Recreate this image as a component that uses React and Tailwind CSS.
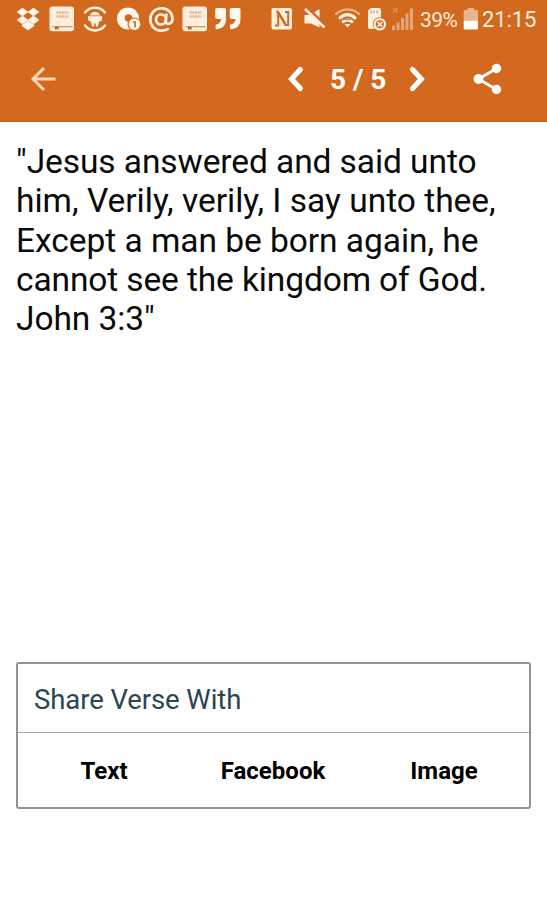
function DropboxIcon() {
  return (
    <svg className="ml-4 h-6 w-6 shrink-0" viewBox="0 0 24 24" fill="#fff6ea" stroke="#fff6ea" strokeWidth="0.500">
      <path d="M6.5 1 12 5 6.5 9 1 5ZM17.5 1 23 5l-5.500 4L12 5ZM6.500 9 12 13l-5.500 4L1 13ZM17.500 9 23 13l-5.500 4L12 13ZM12 13.800l6 4.200v1L12 23l-6-4v-1Z" />
    </svg>
  );
}

function BibleIcon({ className }) {
  return (
    <svg className={className} viewBox="0 0 26 26">
      <rect x="0.500" y="0.500" width="24.500" height="24.800" rx="3" fill="#fdeedd" />
      <path d="M7.500 6.500h12M7.500 10.500h12" stroke="#e8b48b" strokeWidth="2.300" strokeDasharray="2 0.700" />
      <path d="M3.500 20.700h20" stroke="#d98c52" strokeWidth="1.200" />
      <path d="M6 20.700h3.500V24L7.700 22.800 6 24Z" fill="#b8581c" />
    </svg>
  );
}

function RobotIcon() {
  return (
    <svg className="ml-[7px] h-[26px] w-[26px] shrink-0" viewBox="0 0 26 26" fill="none">
      <path d="M3 6.500C8 0 18 0 23 6.500M3 19.500c5 6.500 15 6.500 20 0" stroke="#fff0e0" strokeWidth="2.500" strokeLinecap="round" />
      <path d="M8 9.500C9 4.500 17 4.500 18 9.500l2 .8v3.900l-3 1.600-1 4.700h-2.200v-3h-1.600v3H10l-1-4.700-3-1.600v-3.900Z" fill="#fff0e0" />
      <path d="M7.500 9.800h11" stroke="#d87c3a" strokeWidth="0.900" />
    </svg>
  );
}

function DiscAlertIcon() {
  return (
    <svg className="ml-2 h-[26px] w-[26px] shrink-0" viewBox="0 0 26 26">
      <circle cx="12" cy="12.500" r="11" fill="#fff6ec" />
      <circle cx="12.500" cy="12" r="3.800" fill="#d2691e" />
      <circle cx="18.300" cy="18.200" r="6.800" fill="#d2691e" />
      <circle cx="18.500" cy="18.200" r="5.800" fill="#fff6ec" />
      <path d="M17 16h2v5.500" fill="none" stroke="#d2691e" strokeWidth="1.700" />
    </svg>
  );
}

function AtIcon() {
  return (
    <svg className="ml-[6px] h-[27px] w-[27px] shrink-0" viewBox="0 0 27 27" fill="none" stroke="#fff3e7" strokeWidth="2.600" strokeLinecap="round">
      <circle cx="13" cy="13.500" r="5" />
      <path d="M18.400 8.500 17.800 15c-.2 4.500 6.700 3.500 6.700-2C24.500 6.800 20 2.200 13.500 2.200 7 2.200 2.300 7.200 2.300 13.500c0 6.500 4.700 11.200 11.200 11.200 2.500 0 4.500-.6 6.200-1.600" />
    </svg>
  );
}

function QuoteIcon() {
  return (
    <svg className="ml-1.5 h-6 w-[27px] shrink-0" viewBox="0 0 27 24" fill="#fff9ef">
      <path d="M3 1h7.500Q12 1 12 2.500V12q0 9.500-9 10.300-1.500 0-1.500-1.500v-2q0-1.200 1.500-1.500 3.500-.8 4-5.300H3Q1.200 12 1.200 10V3Q1.200 1 3 1ZM17.500 1H25q1.500 0 1.500 1.500V12q0 9.500-9 10.300-1.500 0-1.500-1.500v-2q0-1.200 1.500-1.500 3.500-.8 4-5.300h-4q-1.800 0-1.800-2V3q0-2 1.800-2Z" />
    </svg>
  );
}

function NfcIcon() {
  return (
    <svg className="h-6 w-[22px] shrink-0" viewBox="0 0 22 24">
      <rect x="0.500" y="1" width="20.500" height="21.500" rx="2" fill="#fff0df" />
      <path d="M4 18.500h3.200V6l7.300 12h2.700V5H14" fill="none" stroke="#d2691e" strokeWidth="2" />
      <path d="M5 5h2.500l7 11.500" fill="none" stroke="#d2691e" strokeWidth="1.500" />
    </svg>
  );
}

function MuteIcon() {
  return (
    <svg className="ml-[10px] h-6 w-6 shrink-0" viewBox="0 0 24 24">
      <path d="M1.500 8H7L16.500 2v18.500L8 16.500H1.500Z" fill="#fff0df" />
      <path d="M3.500 0 24 19.500" stroke="#d2691e" strokeWidth="2.600" />
      <path d="M2 2 21.500 20.500" stroke="#fff0df" strokeWidth="2.600" />
    </svg>
  );
}

function WifiIcon() {
  return (
    <svg className="ml-[7px] h-6 w-[27px] shrink-0" viewBox="0 0 27 24" fill="none" strokeLinecap="round">
      <path d="M2 7C8.500 1 18.500 1 25 7" stroke="#e9ae7d" strokeWidth="2.500" />
      <path d="M6 10.800c4.500-4.200 10.500-4.200 15 0" stroke="#fff0df" strokeWidth="3.200" />
      <path d="M9.300 14.600c2.500-2.200 5.900-2.200 8.400 0" stroke="#fff0df" strokeWidth="3.200" />
      <path d="M10 12.200h7" stroke="#9b8b83" strokeWidth="1.400" />
      <path d="m10.500 17 3 3.500 3-3.500Z" fill="#fff0df" />
    </svg>
  );
}

function SimIcon() {
  return (
    <svg className="ml-[6px] h-[26px] w-5 shrink-0" viewBox="0 0 20 26">
      <path d="M1 4.500 4 2h7.500Q14 2 14 4v19H3q-2 0-2-2Z" fill="#fff2e2" />
      <path d="M4 4.500v3M7 4.500v3M10 4.500v3" stroke="#d98a50" strokeWidth="1.200" />
      <circle cx="12.800" cy="18.300" r="7" fill="#d2691e" />
      <circle cx="12.800" cy="18.300" r="5.200" fill="none" stroke="#fff2e2" strokeWidth="2.200" />
      <path d="m10.500 16 4.600 4.600m0-4.600-4.600 4.600" stroke="#fff2e2" strokeWidth="1.700" />
    </svg>
  );
}

function SignalIcon() {
  return (
    <svg className="ml-[5px] h-6 w-[23px] shrink-0" viewBox="0 0 23 24" fill="#e6a777">
      <path d="M0 18.500H3V23H0ZM4.500 15.500h3V23h-3ZM9 11h3v12H9ZM13.500 6.500h3V23h-3ZM18 1.500h3V23h-3Z" />
      <path d="m1.200 1 4.500 4.500m0-4.500L1.200 5.500" stroke="#e1965e" strokeWidth="1.100" />
    </svg>
  );
}

function BatteryIcon() {
  return (
    <svg className="ml-[5px] h-6 w-4 shrink-0" viewBox="0 0 16 24">
      <path d="M0.700 4Q.7 3 2 3h2.500V1h6.700v2h2.500q1.300 0 1.300 1v9.500H.7Z" fill="#e9b58a" />
      <path d="M0.700 13.500H15v8q0 1-1 1H1.700q-1 0-1-1Z" fill="#fffdf8" />
    </svg>
  );
}

function StatusBar() {
  return (
    <div className="flex h-[38px] items-center text-[#ffeedd]">
      <DropboxIcon />
      <BibleIcon className="ml-[9px] h-[26px] w-[26px] shrink-0" />
      <RobotIcon />
      <DiscAlertIcon />
      <AtIcon />
      <BibleIcon className="ml-[7px] h-[26px] w-[26px] shrink-0" />
      <QuoteIcon />
      <span className="w-[30px] shrink-0" />
      <NfcIcon />
      <MuteIcon />
      <WifiIcon />
      <SimIcon />
      <SignalIcon />
      <span className="mt-0.5 ml-[5px] w-[38px] shrink-0 text-[21px] leading-6 tracking-[-0.500px]">39%</span>
      <BatteryIcon />
      <span className="mt-0.5 ml-[3px] shrink-0 text-[22px] leading-6 tracking-[-0.100px]">21:15</span>
    </div>
  );
}

function Toolbar() {
  return (
    <div className="flex h-[84px] items-center border-b border-[#c45712]">
      <svg className="-mt-px ml-[30px] h-7 w-7 shrink-0" viewBox="0 0 28 28" fill="none" stroke="#ffd9bb" strokeWidth="2.900">
        <path d="M25.500 14H3M14 3 3 14l11 11" />
      </svg>
      <svg className="-mt-px ml-[229px] h-7 w-[18px] shrink-0" viewBox="0 0 18 28" fill="none" stroke="white" strokeWidth="5.200" strokeLinecap="round">
        <path d="M13.300 4.500 4.500 14l8.800 9.500" />
      </svg>
      <span className="ml-[25px] w-[56px] shrink-0 whitespace-nowrap text-[28px] leading-8 font-bold text-white">5 / 5</span>
      <svg className="-mt-px ml-[22px] h-7 w-[18px] shrink-0" viewBox="0 0 18 28" fill="none" stroke="white" strokeWidth="5.200" strokeLinecap="round">
        <path d="m4.500 4.500 8.800 9.500-8.800 9.500" />
      </svg>
      <svg className="-mt-px ml-[47px] h-8 w-[30px] shrink-0" viewBox="0 0 30 32" fill="white">
        <path d="M23.500 5.500 5.500 16l18 10.500" fill="none" stroke="white" strokeWidth="2.900" />
        <circle cx="23.500" cy="5.500" r="4.700" />
        <circle cx="5.500" cy="16" r="4.900" />
        <circle cx="23.500" cy="26.500" r="4.700" />
      </svg>
    </div>
  );
}

export default function App() {
  return (
    <main className="flex h-[900px] w-[547px] flex-col overflow-hidden bg-white font-[Roboto,sans-serif]">
      <header className="h-[122px] shrink-0 bg-[#d2691e]">
        <StatusBar />
        <Toolbar />
      </header>
      <p className="mt-5 ml-4 h-[520px] shrink-0 whitespace-nowrap text-[33.500px] leading-[39.300px] text-[#0a0a0a]">
        <span className="tracking-[-0.080px]">"Jesus answered and said unto</span><br />
        him, Verily, verily, I say unto thee,<br />
        <span className="tracking-[-0.040px]">Except a man be born again, he</span><br />
        <span className="tracking-[-0.120px]">cannot see the kingdom of God.</span><br />
        <span className="tracking-[-0.080px]">John 3:3"</span>
      </p>
      <section className="ml-4 h-[147px] w-[515px] shrink-0 rounded-[3px] border-2 border-[#929292]">
        <h2 className="flex h-[69px] items-center border-b border-[#aaa] pt-1 pl-4 text-[27.500px] tracking-[-0.080px] text-[#294653]">Share Verse With</h2>
        <div className="flex h-[73px] items-center pt-0.5 text-2xl font-bold text-black">
          <button className="ml-[62px] w-[48px]">Text</button>
          <button className="ml-[92px] w-[106px]">Facebook</button>
          <button className="ml-[84px] w-[68px]">Image</button>
        </div>
      </section>
    </main>
  );
}
